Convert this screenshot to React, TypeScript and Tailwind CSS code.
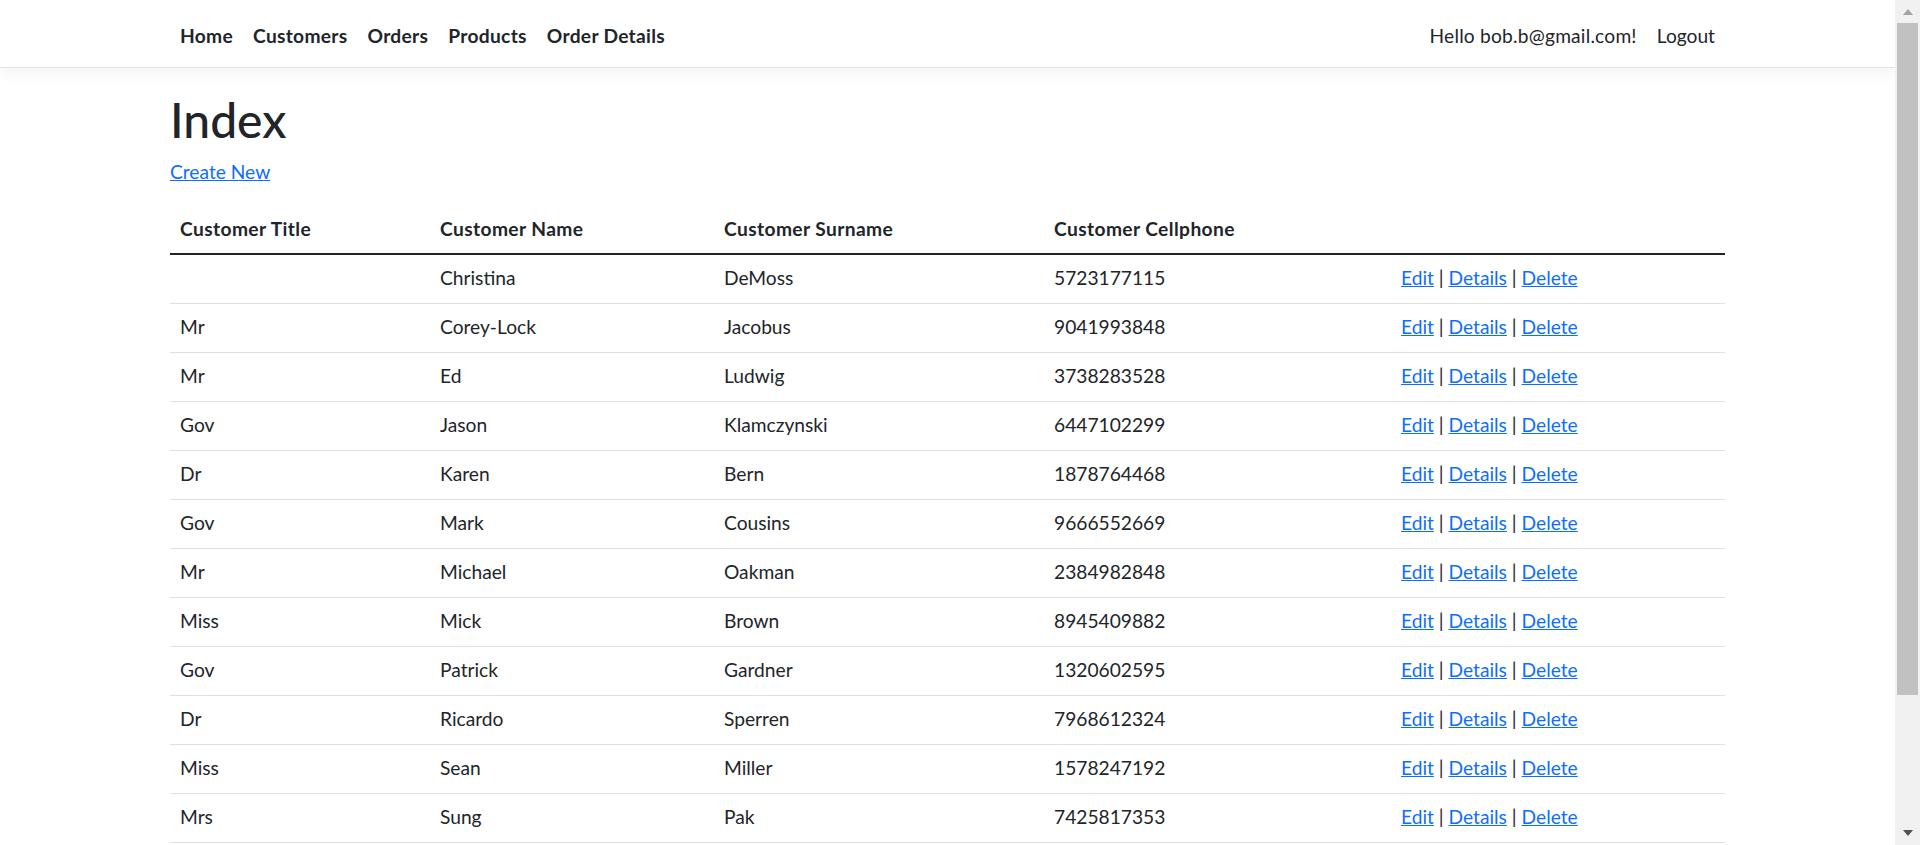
import React from 'react';

const customers = [
  { title: '', name: 'Christina', surname: 'DeMoss', cell: '5723177115' },
  { title: 'Mr', name: 'Corey-Lock', surname: 'Jacobus', cell: '9041993848' },
  { title: 'Mr', name: 'Ed', surname: 'Ludwig', cell: '3738283528' },
  { title: 'Gov', name: 'Jason', surname: 'Klamczynski', cell: '6447102299' },
  { title: 'Dr', name: 'Karen', surname: 'Bern', cell: '1878764468' },
  { title: 'Gov', name: 'Mark', surname: 'Cousins', cell: '9666552669' },
  { title: 'Mr', name: 'Michael', surname: 'Oakman', cell: '2384982848' },
  { title: 'Miss', name: 'Mick', surname: 'Brown', cell: '8945409882' },
  { title: 'Gov', name: 'Patrick', surname: 'Gardner', cell: '1320602595' },
  { title: 'Dr', name: 'Ricardo', surname: 'Sperren', cell: '7968612324' },
  { title: 'Miss', name: 'Sean', surname: 'Miller', cell: '1578247192' },
  { title: 'Mrs', name: 'Sung', surname: 'Pak', cell: '7425817353' },
];

const navLinks = ['Home', 'Customers', 'Orders', 'Products', 'Order Details'];

const App: React.FC = () => {
  return (
    <div className="flex h-[845px] overflow-hidden bg-white text-[#212529] font-['Lato','Liberation_Sans',sans-serif] text-[19.2px]">
      <div className="flex-1 min-w-0">
        {/* Top navbar */}
        <header className="bg-white border-b border-[#e5e5e5] shadow-[0_5px_15px_rgba(0,0,0,0.05)]">
          <nav className="w-[1579px] mx-auto px-3 pt-[5px] h-[67px] flex items-center justify-between">
            <ul className="flex items-center">
              {navLinks.map(l => (
                <li key={l}>
                  <a href="#" className="block px-[10px] font-bold tracking-[0.3px] text-[#212529]">{l}</a>
                </li>
              ))}
            </ul>
            <ul className="flex items-center">
              <li><span className="block px-[10px] tracking-[0.2px]">Hello bob.b@gmail.com!</span></li>
              <li><a href="#" className="block px-[10px] text-[#212529]">Logout</a></li>
            </ul>
          </nav>
        </header>

        <main className="w-[1579px] mx-auto px-3 pt-[23px]">
          <h1 className="text-[48px] leading-[57.6px] font-medium mb-[9px]">Index</h1>
          <p className="leading-[28.8px] mb-[19px]">
            <a href="#" className="text-[#0d6efd] underline">Create New</a>
          </p>

          <table className="w-full table-fixed border-collapse">
            <colgroup>
              <col className="w-[260px]" />
              <col className="w-[284px]" />
              <col className="w-[330px]" />
              <col className="w-[347px]" />
              <col className="w-[334px]" />
            </colgroup>
            <thead>
              <tr className="border-b-2 border-[#212529]">
                <th className="px-[10px] py-[10px] leading-[28px] text-left font-bold tracking-[0.4px]">Customer Title</th>
                <th className="px-[10px] py-[10px] leading-[28px] text-left font-bold tracking-[0.4px]">Customer Name</th>
                <th className="px-[10px] py-[10px] leading-[28px] text-left font-bold tracking-[0.4px]">Customer Surname</th>
                <th className="px-[10px] py-[10px] leading-[28px] text-left font-bold tracking-[0.4px]">Customer Cellphone</th>
                <th className="px-[10px] py-[10px] leading-[28px]"></th>
              </tr>
            </thead>
            <tbody>
              {customers.map((c, i) => (
                <tr key={i} className="border-b border-[#dee2e6]">
                  <td className="px-[10px] pt-[9px] pb-[11px] leading-[28px]">{c.title}</td>
                  <td className="px-[10px] pt-[9px] pb-[11px] leading-[28px]">{c.name}</td>
                  <td className="px-[10px] pt-[9px] pb-[11px] leading-[28px]">{c.surname}</td>
                  <td className="px-[10px] pt-[9px] pb-[11px] leading-[28px]">{c.cell}</td>
                  <td className="px-[10px] pt-[9px] pb-[11px] leading-[28px]">
                    <a href="#" className="text-[#0d6efd] underline">Edit</a> |{' '}
                    <a href="#" className="text-[#0d6efd] underline">Details</a> |{' '}
                    <a href="#" className="text-[#0d6efd] underline">Delete</a>
                  </td>
                </tr>
              ))}
            </tbody>
          </table>
        </main>
      </div>

      {/* Scrollbar */}
      <div className="w-[25px] shrink-0 bg-[#f1f1f1] flex flex-col items-center">
        <div className="h-[23px] w-full flex items-center justify-center">
          <svg width="10" height="6" viewBox="0 0 10 6"><path d="M0 6 L5 0 L10 6 Z" fill="#a3a3a3" /></svg>
        </div>
        <div className="w-[21px] h-[672px] bg-[#c1c1c1]" />
        <div className="flex-1" />
        <div className="h-[25px] w-full flex items-center justify-center">
          <svg width="10" height="6" viewBox="0 0 10 6"><path d="M0 0 L5 6 L10 0 Z" fill="#505050" /></svg>
        </div>
      </div>
    </div>
  );
};

export default App;
